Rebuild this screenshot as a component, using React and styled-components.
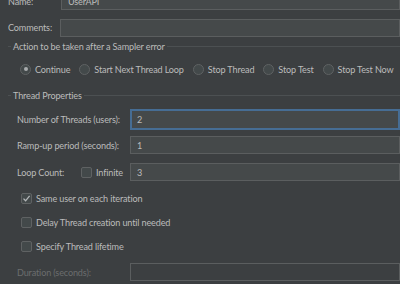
import React from 'react';
import styled, { createGlobalStyle } from 'styled-components';

const GlobalStyle = createGlobalStyle`
  html, body {
    margin: 0;
    padding: 0;
    background: #3c3f41;
    overflow: hidden;
  }
  body {
    font-family: Lato, "Noto Sans", sans-serif;
    font-size: 9.1px;
    letter-spacing: -0.15px;
    color: #bbbbbb;
  }
`;

const Page = styled.div`
  width: 400px;
  height: 284px;
  overflow: hidden;
  display: flex;
  flex-direction: column;
`;

const Inner = styled.div`
  margin-top: -8px;
  display: flex;
  flex-direction: column;
`;

const FieldRow = styled.div`
  display: flex;
  align-items: center;
  padding-left: ${props => props.indent || 8}px;
  margin-top: ${props => props.top || 0}px;
  height: ${props => props.h || 18}px;
`;

const Label = styled.span`
  width: ${props => props.w}px;
  flex-shrink: 0;
  white-space: nowrap;
  color: ${props => props.disabled ? '#6b6d6e' : '#bbbbbb'};
`;

const Field = styled.div`
  flex: 1;
  box-sizing: border-box;
  height: ${props => props.focused ? 21 : 18}px;
  background: ${props => props.disabled ? '#3c3f41' : '#45494a'};
  border: ${props => props.focused ? '2px solid #466d94' : '1px solid #5b5e5f'};
  display: flex;
  align-items: center;
  padding-left: ${props => props.focused ? 5 : 6}px;
  color: #bbbbbb;
`;

const GroupTitle = styled.div`
  display: flex;
  align-items: center;
  gap: 2px;
  margin-left: 8px;
  margin-top: ${props => props.top}px;
  height: 14px;
  white-space: nowrap;

  &::before {
    content: "";
    width: 3px;
    height: 1px;
    background: #4c5052;
  }
  &::after {
    content: "";
    flex: 1;
    height: 1px;
    background: #4c5052;
  }
`;

const RadioRow = styled.div`
  display: flex;
  align-items: center;
  gap: 9px;
  padding-left: 20px;
  margin-top: 9px;
  height: 14px;
`;

const Option = styled.label`
  display: flex;
  align-items: center;
  gap: 4px;
  white-space: nowrap;
`;

const Radio = styled.span`
  width: 11px;
  height: 11px;
  box-sizing: border-box;
  border-radius: 50%;
  border: 1px solid #5f6263;
  background: #43494a;
  display: flex;
  align-items: center;
  justify-content: center;

  &::after {
    content: "";
    display: ${props => props.checked ? 'block' : 'none'};
    width: 4px;
    height: 4px;
    border-radius: 50%;
    background: #a9acae;
  }
`;

const Box = styled.span`
  width: 11px;
  height: 11px;
  box-sizing: border-box;
  border-radius: 2px;
  border: 1px solid #5f6263;
  background: #43494a;
  display: flex;
  align-items: center;
  justify-content: center;
  flex-shrink: 0;
`;

const CheckRow = styled(Option)`
  padding-left: 21px;
  margin-top: ${props => props.top}px;
  height: 14px;
`;

const InfiniteOption = styled(Option)`
  width: 49px;
  flex-shrink: 0;
`;

const Check = () => (
  <svg width="9" height="9" viewBox="0 0 9 9">
    <path d="M1.5 4.6 L3.6 6.8 L7.6 1.8" fill="none" stroke="#b4b7b9" strokeWidth="1.3" />
  </svg>
);

const App = () => {
  return (
    <Page>
      <GlobalStyle />
      <Inner>
        <FieldRow>
          <Label w={53}>Name:</Label>
          <Field>UserAPI</Field>
        </FieldRow>
        <FieldRow top={9} h={17}>
          <Label w={52}>Comments:</Label>
          <Field />
        </FieldRow>
        <GroupTitle top={3}>Action to be taken after a Sampler error</GroupTitle>
        <RadioRow>
          <Option><Radio checked />Continue</Option>
          <Option><Radio />Start Next Thread Loop</Option>
          <Option><Radio />Stop Thread</Option>
          <Option><Radio />Stop Test</Option>
          <Option><Radio />Stop Test Now</Option>
        </RadioRow>
        <GroupTitle top={12}>Thread Properties</GroupTitle>
        <FieldRow indent={17} top={7} h={21}>
          <Label w={113}>Number of Threads (users):</Label>
          <Field focused>2</Field>
        </FieldRow>
        <FieldRow indent={17} top={6}>
          <Label w={113}>Ramp-up period (seconds):</Label>
          <Field>1</Field>
        </FieldRow>
        <FieldRow indent={17} top={9}>
          <Label w={64}>Loop Count:</Label>
          <InfiniteOption><Box />Infinite</InfiniteOption>
          <Field>3</Field>
        </FieldRow>
        <CheckRow top={10}><Box><Check /></Box>Same user on each iteration</CheckRow>
        <CheckRow top={10}><Box />Delay Thread creation until needed</CheckRow>
        <CheckRow top={10}><Box />Specify Thread lifetime</CheckRow>
        <FieldRow indent={17} top={10}>
          <Label w={113} disabled>Duration (seconds):</Label>
          <Field disabled />
        </FieldRow>
      </Inner>
    </Page>
  );
};

export default App;
